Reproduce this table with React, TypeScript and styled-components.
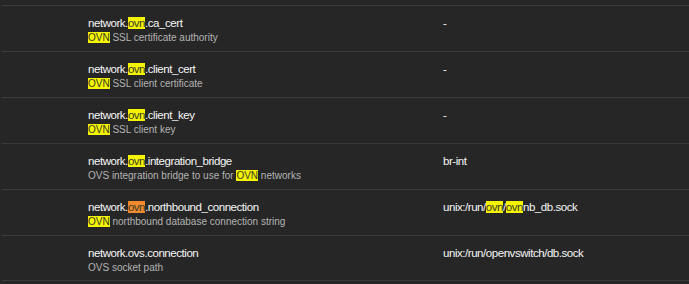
import React from 'react'
import styled, { createGlobalStyle } from 'styled-components'

const GlobalStyle = createGlobalStyle`
  html, body {
    margin: 0;
    padding: 0;
    background: #262626;
  }
  body {
    font-family: "Liberation Sans", Arial, sans-serif;
    color: #ffffff;
  }
`

const Table = styled.div`
  padding: 5px 0 0 2px;
  width: 687px;
`

const Row = styled.div`
  display: grid;
  grid-template-columns: 86px 355px 1fr;
  height: 46px;
  border-top: 1px solid #3b3b3b;
  box-sizing: border-box;
  &:last-child {
    border-bottom: 1px solid #3b3b3b;
  }
`

const KeyCell = styled.div`
  grid-column: 2;
  padding-top: 10px;
  display: flex;
  flex-direction: column;
`

const Name = styled.div`
  font-size: 11.5px;
  line-height: 15px;
  letter-spacing: -0.45px;
  color: #f6f6f6;
`

const Description = styled.div`
  font-size: 10px;
  line-height: 13px;
  color: #b4b4b4;
`

const ValueCell = styled.div`
  grid-column: 3;
  padding-top: 10px;
  font-size: 11.5px;
  line-height: 15px;
  letter-spacing: -0.45px;
  color: #f6f6f6;
`

const Mark = styled.mark<{ $current?: boolean }>`
  background: ${(p) => (p.$current ? '#f08a2c' : '#f4f400')};
  color: #3a3a2a;
  padding: 0;
`

type Part = string | { hl: string; current?: boolean }

const render = (parts: Part[]) =>
  parts.map((p, i) =>
    typeof p === 'string' ? (
      <React.Fragment key={i}>{p}</React.Fragment>
    ) : (
      <Mark key={i} $current={p.current}>
        {p.hl}
      </Mark>
    )
  )

const rows: { name: Part[]; desc: Part[]; value: Part[] }[] = [
  {
    name: ['network.', { hl: 'ovn' }, '.ca_cert'],
    desc: [{ hl: 'OVN' }, ' SSL certificate authority'],
    value: ['-'],
  },
  {
    name: ['network.', { hl: 'ovn' }, '.client_cert'],
    desc: [{ hl: 'OVN' }, ' SSL client certificate'],
    value: ['-'],
  },
  {
    name: ['network.', { hl: 'ovn' }, '.client_key'],
    desc: [{ hl: 'OVN' }, ' SSL client key'],
    value: ['-'],
  },
  {
    name: ['network.', { hl: 'ovn' }, '.integration_bridge'],
    desc: ['OVS integration bridge to use for ', { hl: 'OVN' }, ' networks'],
    value: ['br-int'],
  },
  {
    name: ['network.', { hl: 'ovn', current: true }, '.northbound_connection'],
    desc: [{ hl: 'OVN' }, ' northbound database connection string'],
    value: ['unix:/run/', { hl: 'ovn' }, '/', { hl: 'ovn' }, 'nb_db.sock'],
  },
  {
    name: ['network.ovs.connection'],
    desc: ['OVS socket path'],
    value: ['unix:/run/openvswitch/db.sock'],
  },
]

export default function App() {
  return (
    <>
      <GlobalStyle />
      <Table>
        {rows.map((r, i) => (
          <Row key={i}>
            <KeyCell>
              <Name>{render(r.name)}</Name>
              <Description>{render(r.desc)}</Description>
            </KeyCell>
            <ValueCell>{render(r.value)}</ValueCell>
          </Row>
        ))}
      </Table>
    </>
  )
}
